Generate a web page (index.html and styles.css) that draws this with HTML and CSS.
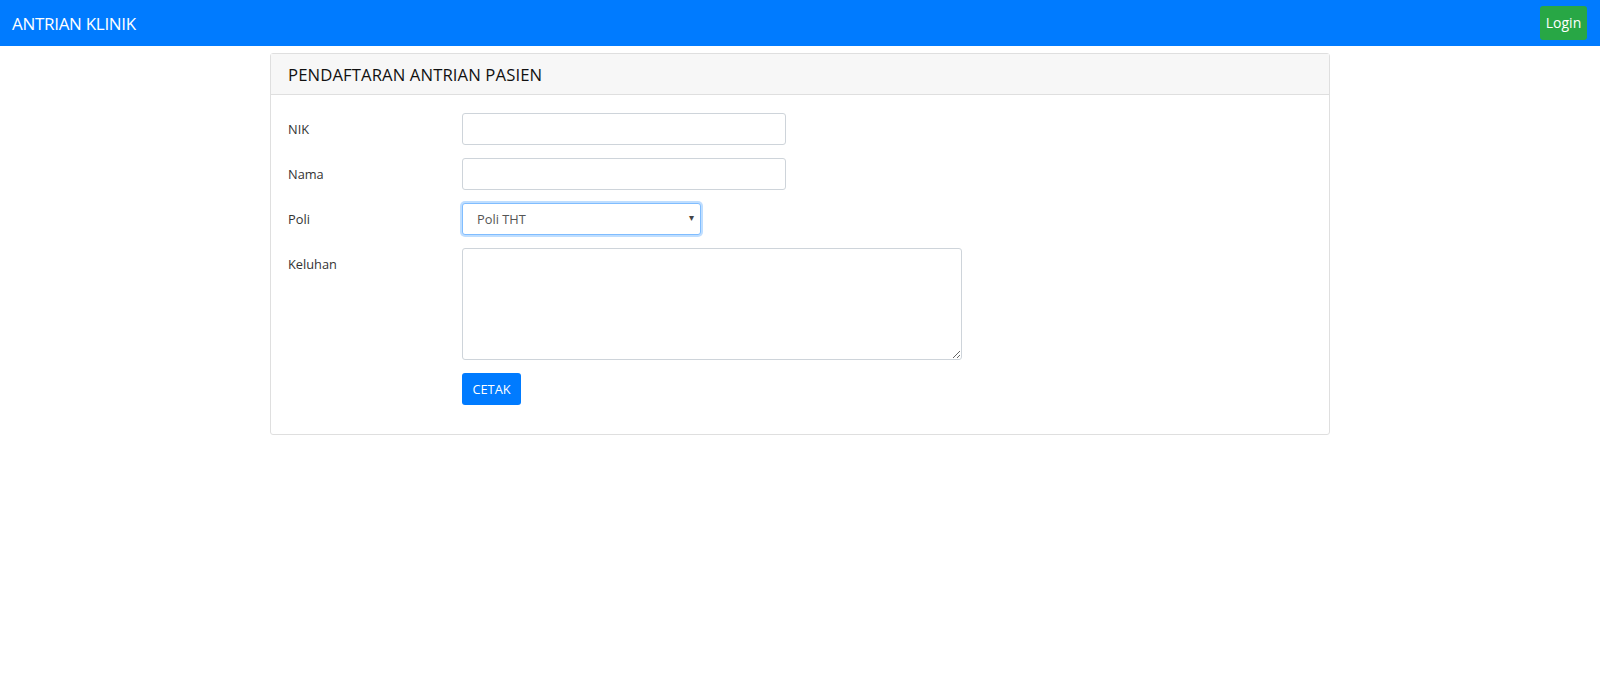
FILE: index.html
```html
<!DOCTYPE html>
<html>
<head>
    <meta charset="UTF-8">
    <meta name="viewport" content="width=device-width, initial-scale=1.0">
    <title>Antrian Klinik</title>
    <link rel="stylesheet" href="styles.css">
</head>
<body>
    <nav class="navbar">
        <a class="brand" href="#">ANTRIAN KLINIK</a>
        <button type="button" class="btn-login">Login</button>
    </nav>

    <div class="card">
        <div class="card-header">PENDAFTARAN ANTRIAN PASIEN</div>
        <form class="card-body" id="antrianForm">
            <div class="form-row">
                <label for="nik">NIK</label>
                <input type="text" id="nik" class="input-md">
            </div>
            <div class="form-row">
                <label for="nama">Nama</label>
                <input type="text" id="nama" class="input-md">
            </div>
            <div class="form-row">
                <label for="poli">Poli</label>
                <div class="select-wrap">
                    <select id="poli" class="select">
                        <option>Poli THT</option>
                        <option>Poli Umum</option>
                        <option>Poli Gigi</option>
                    </select>
                </div>
            </div>
            <div class="form-row top">
                <label for="keluhan">Keluhan</label>
                <textarea id="keluhan" rows="5"></textarea>
            </div>
            <div class="form-row">
                <span class="spacer"></span>
                <button type="submit" class="btn-cetak">CETAK</button>
            </div>
        </form>
    </div>
</body>
</html>
```

FILE: styles.css
```css
body { margin: 0; font-family: "Open Sans", "Noto Sans", sans-serif; color: #212529; background: #fff; }
.navbar { display: flex; align-items: center; justify-content: space-between; height: 46px; background: #007bff; padding: 0 13px 0 12px; box-sizing: border-box; }
.brand { color: #fff; text-decoration: none; font-size: 17px; letter-spacing: -0.3px; }
.btn-login { background: #28a745; color: #fff; border: none; border-radius: 3px; height: 34px; width: 47px; padding: 0; font-family: inherit; font-size: 14px; margin-top: -1px; }
.card { width: 1060px; margin: 7px 0 0 270px; border: 1px solid #dfdfdf; border-radius: 3px; box-sizing: border-box; }
.card-header { background: #f7f7f7; border-bottom: 1px solid #dfdfdf; height: 41px; box-sizing: border-box; padding: 0 17px; display: flex; align-items: center; font-size: 16.7px; letter-spacing: 0.1px; color: #111; }
.card-body { padding: 18px 17px 29px; display: flex; flex-direction: column; gap: 13px; }
.form-row { display: flex; align-items: center; }
.form-row.top { align-items: flex-start; }
.form-row.top label { padding-top: 7px; }
.form-row label, .spacer { width: 174px; flex-shrink: 0; font-size: 12.8px; color: #333; }
input, select, textarea { font-family: inherit; border: 1px solid #ced4da; border-radius: 3px; box-sizing: border-box; font-size: 12.8px; }
.input-md { width: 324px; height: 32px; }
.select-wrap { position: relative; width: 239px; height: 32px; }
.select-wrap::after { content: "\25BE"; position: absolute; right: 7px; top: 7px; font-size: 10px; color: #444; pointer-events: none; }
.select { -webkit-appearance: none; appearance: none; width: 100%; height: 100%; padding: 0 14px; color: #555; background: #fff; border-color: #80bdff; box-shadow: 0 0 0 2px rgba(0,123,255,.25); outline: none; }
textarea { width: 500px; height: 112px; }
.btn-cetak { background: #007bff; color: #fff; border: none; border-radius: 3px; width: 59px; height: 32px; padding: 0; font-family: inherit; font-size: 12.8px; }
```
